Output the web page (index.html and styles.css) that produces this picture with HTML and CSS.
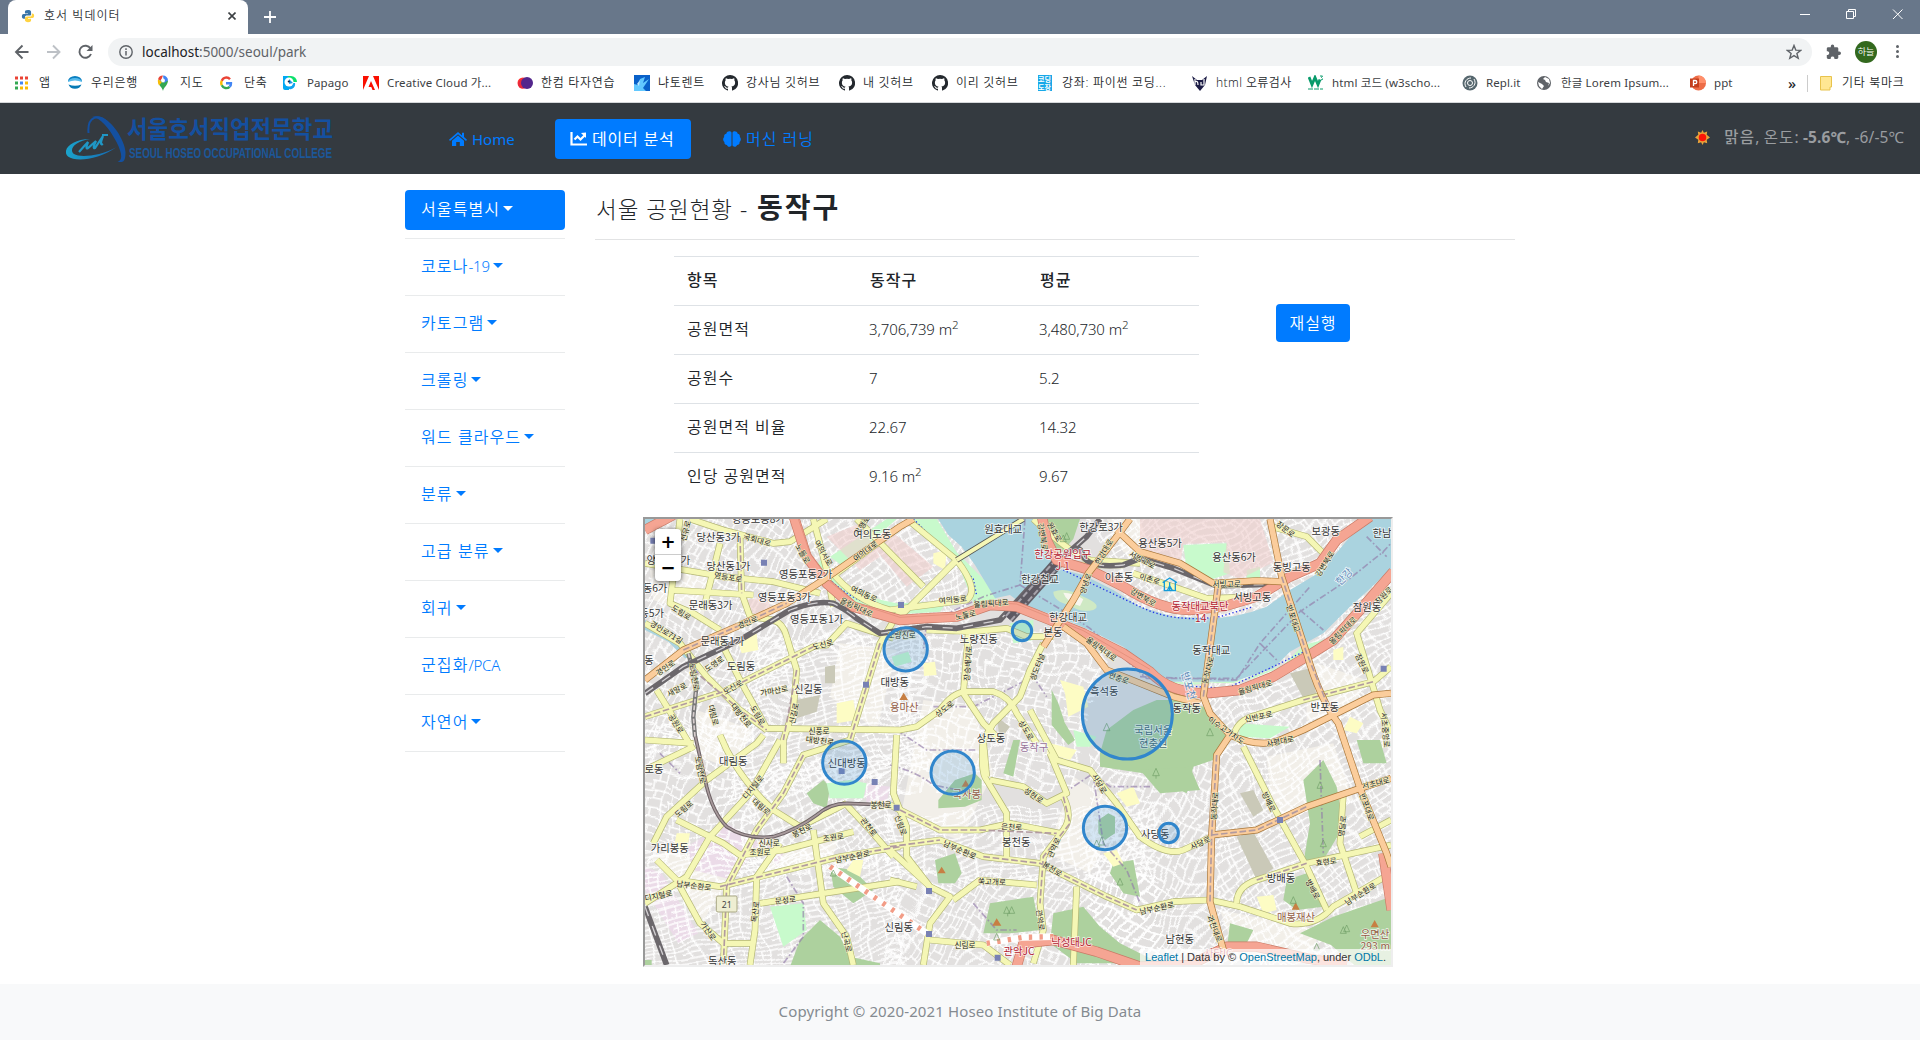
FILE: index.html
```html
<!DOCTYPE html>
<html lang="ko">
<head>
<meta charset="utf-8">
<title>호서 빅데이터</title>
<link rel="stylesheet" href="styles.css">
</head>
<body>
<svg width="0" height="0" class="sprite">
  <symbol id="github" viewBox="0 0 16 16"><path fill="#24292e" d="M8 0a8 8 0 0 0-2.500 15.600c.4.1.5-.2.5-.4v-1.500c-2.200.5-2.700-1-2.700-1-.4-.9-.9-1.200-.9-1.200-.7-.5.1-.5.1-.5.800.1 1.200.8 1.200.8.7 1.300 1.900.9 2.300.7.1-.5.3-.9.5-1.100-1.800-.2-3.600-.9-3.600-4 0-.9.3-1.600.8-2.100-.1-.2-.4-1 .1-2.100 0 0 .7-.2 2.200.8a7.500 7.500 0 0 1 4 0c1.500-1 2.200-.8 2.200-.8.4 1.100.2 1.900.1 2.100.5.6.8 1.300.8 2.100 0 3.100-1.900 3.700-3.700 3.900.3.300.6.800.6 1.500v2.400c0 .2.1.5.600.4A8 8 0 0 0 8 0z"/></symbol>
</svg>

<header class="tabs">
  <div class="tab">
    <svg class="fav" viewBox="0 0 16 16"><path fill="#3974a8" d="M8 1c-3 0-3.500 1-3.500 2.500V5H8v.7H3C1.500 5.700 1 7 1 8.500S1.800 11 3 11h1.500V9.500C4.500 8 5.500 7.500 7 7.500h3c1 0 1.500-.6 1.500-1.500V3.500C11.500 1.500 10 1 8 1z"/><path fill="#ffd342" d="M8 15c3 0 3.500-1 3.500-2.500V11H8v-.7h5c1.500 0 2-1.300 2-2.800S14.200 5 13 5h-.7v1.800c0 1.200-1 1.900-2.200 1.900H7c-1.500 0-2.500.8-2.500 2v2C4.500 14.500 6 15 8 15z"/></svg>
    <span class="tabtitle">호서 빅데이터</span>
    <svg class="x" viewBox="0 0 8 8"><path d="M.5.5l7 7m0-7l-7 7" stroke="#3c4043" stroke-width="1.600"/></svg>
  </div>
  <svg class="plus" viewBox="0 0 12 12"><path d="M6 0v12M0 6h12" stroke="#fff" stroke-width="1.800"/></svg>
  <svg class="winbtns" viewBox="0 0 104 12"><g fill="none" stroke="#fff"><path d="M0 6.500h10M46.500 3.500h7v7h-7zM48.500 3v-1.500h7v7h-2M93 1.500l9.500 9.500m0-9.500L93 11"/></g></svg>
</header>

<div class="toolbar">
  <svg class="navico" viewBox="0 0 80 18"><g fill="none" stroke="#5f6368" stroke-width="1.900"><path d="M14.500 9H2M8.500 2.500L2 9l6.500 6.500"/><path stroke="#bdc1c6" d="M33 9h12.500M39 2.500L45.500 9 39 15.500"/><path d="M76.500 5.500A6 6 0 1 0 77 11"/></g><path fill="#5f6368" d="M78.500 2v6h-6z"/></svg>
  <div class="url">
    <svg class="info" viewBox="0 0 14 14"><circle cx="7" cy="7" r="6.200" fill="none" stroke="#5f6368" stroke-width="1.400"/><path d="M7 6v4.500M7 3.300v1.600" stroke="#5f6368" stroke-width="1.500"/></svg>
    <span><b>localhost</b>:5000/seoul/park</span>
    <svg class="star" viewBox="0 0 16 16"><path d="M8 1.500l1.800 4.600 4.900.3-3.800 3.100 1.300 4.800L8 11.600l-4.200 2.700 1.300-4.800L1.300 6.400l4.900-.3z" fill="none" stroke="#5f6368" stroke-width="1.400"/></svg>
  </div>
  <svg class="puzzle" viewBox="0 0 16 16"><path fill="#5f6368" d="M13.300 7.500h-1V4.700c0-.8-.6-1.400-1.400-1.400H8.200v-1a1.700 1.700 0 0 0-3.400 0v1H2.100C1.400 3.300.8 3.900.8 4.700v2.500h1a1.900 1.900 0 0 1 0 3.700h-1v2.600c0 .8.600 1.400 1.300 1.400h2.600v-1a1.900 1.900 0 0 1 3.700 0v1h2.500c.800 0 1.400-.6 1.400-1.400v-2.600h1a1.700 1.700 0 0 0 0-3.400z"/></svg>
  <span class="avatar">하늘</span>
  <span class="dots"><i></i><i></i><i></i></span>
</div>

<nav class="bookmarks">
  <a><svg viewBox="0 0 16 16"><path stroke="#ea4335" stroke-width="3" d="M0 3h3m2 0h3m2 0h3"/><path stroke="#34a853" stroke-width="3" d="M0 8h3M0 13h3"/><path stroke="#4285f4" stroke-width="3" d="M5 8h3"/><path stroke="#fbbc04" stroke-width="3" d="M10 8h3M5 13h3m2 0h3"/></svg><span>앱</span></a>
  <a><svg viewBox="0 0 16 16"><path fill="#0a7fc0" d="M1 6.500a7 5.500 0 0 1 14 0Q8 1.500 1 6.500z"/><path fill="#57bbec" d="M1 7a7 4 0 0 1 14 0Q8 4 1 7z"/><path fill="#067ab5" d="M1.500 9.500Q8 12 14.500 9.500a6.800 6 0 0 1-13 0z"/></svg><span>우리은행</span></a>
  <a><svg viewBox="0 0 16 16"><path fill="#34a853" d="M7 16C6.500 12.500 2 10 2 5.500h10C12 10 7.500 12.500 7 16z"/><path fill="#4285f4" d="M7 .5a5 5 0 0 1 5 5L8 8z"/><path fill="#ea4335" d="M2 4.500a5 5 0 0 1 5-4l-2 5z"/><path fill="#fbbc04" d="M2 4.500L6 7l-3 3.500C2 8 1.500 6 2 4.500z"/><circle cx="7" cy="5.500" r="1.900" fill="#fff"/></svg><span>지도</span></a>
  <a><svg viewBox="0 0 16 16" fill="none" stroke-width="2.400"><path stroke="#ea4335" d="M10 4.300A4.800 4.800 0 0 0 1.800 5.800"/><path stroke="#fbbc04" d="M1.800 5.800a5 5 0 0 0 0 4.500"/><path stroke="#34a853" d="M1.800 10.300a4.900 4.900 0 0 0 7.800 1.500"/><path stroke="#4285f4" d="M9.600 11.800c1.100-1.200 1.500-2.300 1.400-3.500H6"/></svg><span>단축</span></a>
  <a><svg viewBox="0 0 16 16"><path fill="#00a8f3" d="M0 1h6v14H2a2 2 0 0 1-2-2z"/><path fill="#0be06b" d="M5 1h3a6 6 0 0 1 6 6H7z"/><path fill="#10a4f0" d="M6 8h6a5 5 0 0 1-6 6z"/><circle cx="6" cy="7" r="4.500" fill="#fff"/><path fill="#1798e5" d="M6 4l4 4-4 1z"/><circle cx="5.800" cy="6.500" r="1.100" fill="#124"/></svg><span class="latin">Papago</span></a>
  <a><svg viewBox="0 0 16 16" fill="#fa0f00"><path d="M0 1h6L0 15zM16 1h-6l6 14zM8 6l4 9H9.500L8.300 12H5.500z"/></svg><span class="mix">Creative Cloud 가...</span></a>
  <a><svg viewBox="0 0 16 16"><circle cx="6" cy="8" r="5.500" fill="#f33"/><circle cx="5.500" cy="9" r="4.500" fill="#e8283c"/><circle cx="10" cy="8" r="6" fill="#53268c"/></svg><span>한컴 타자연습</span></a>
  <a><svg viewBox="0 0 16 16"><path fill="#0961c9" d="M0 0h16v16H0z"/><path fill="#62c8ff" d="M0 16V9l4 1 2-6 5-2-2 6 6-4-4 6-2 3 3 3z"/><path fill="#bfeaff" d="M3 9l3-4-1 6z"/></svg><span>냐토렌트</span></a>
  <a><svg><use href="#github"/></svg><span>강사님 깃허브</span></a>
  <a><svg><use href="#github"/></svg><span>내 깃허브</span></a>
  <a><svg><use href="#github"/></svg><span>이리 깃허브</span></a>
  <a><svg viewBox="0 0 16 16" class="coding"><path fill="#18a8e8" d="M0 0h14v16H0z"/><text x="0" y="7">코딩</text><text x="0" y="15">도장</text></svg><span>강좌: 파이썬 코딩...</span></a>
  <a><svg viewBox="0 0 16 16"><path fill="#1c1c45" d="M0 1l5 4h5l5-4-2 9-5 6-5-6z"/><path fill="none" stroke="#fff" stroke-width="1.200" d="M3 4v6m0-3q3-2 3 3m3-3v3h3V4"/></svg><span class="tight">html 오류검사</span></a>
  <a><svg viewBox="0 0 16 16"><path fill="none" stroke="#089b6b" stroke-width="2.800" d="M1 2l3 7.500 3-7 3 7 2-5"/><path fill="none" stroke="#089b6b" d="M12 1h2.500l-1 1.500L15 4l-2 1M0 14h15" stroke-dasharray="5 1"/></svg><span class="mix">html 코드 (w3scho...</span></a>
  <a><svg viewBox="0 0 16 16"><circle cx="8" cy="8" r="7.500" fill="#56676e"/><g fill="none" stroke="#fff"><circle cx="8" cy="8" r="2.500"/><path d="M4 12C1 7 5 3 9 3m3 1c3 5-1 9-5 9"/></g></svg><span class="latin">Repl.it</span></a>
  <a><svg viewBox="0 0 16 16"><circle cx="7" cy="8" r="7" fill="#5f6368"/><path fill="#fff" d="M8 2L6 4l2 1 1 2 3 1-1 3 2-3-1-4zM1 7l4 2 2 2-2 3-3-3z"/></svg><span class="mix">한글 Lorem Ipsum...</span></a>
  <a><svg viewBox="0 0 16 16"><circle cx="8.500" cy="8" r="7.500" fill="#ed6c47"/><path fill="#ff8f6b" d="M8.500.5a7.500 7.500 0 0 1 7.500 7.500H8.500z"/><path fill="#c43e1c" d="M0 3.500h9v9H0z"/><path fill="none" stroke="#fff" stroke-width="1.300" d="M3.500 11V5.500h1.700a1.500 1.500 0 0 1 0 3.200H3.500"/></svg><span class="latin">ppt</span></a>
  <b class="more">»</b>
  <a class="other"><svg viewBox="0 0 16 16"><path fill="#ffe793" stroke="#e8c34c" d="M1.500 1.500h11V12h-1.500v3H1.500z"/></svg><span>기타 북마크</span></a>
</nav>

<div class="navbar">
  <svg class="logo" viewBox="0 0 270 50">
    <defs><linearGradient id="lg"><stop offset="0" stop-color="#1ba4cc"/><stop offset="1" stop-color="#1566b0"/></linearGradient></defs>
    <path fill="none" stroke="#1450a0" stroke-width="2" d="M22.500 19C21 2 33-1 42 9"/>
    <path fill="#1450a0" d="M26 3c16-6 34 24 33.500 36 0 6-1.500 9-4 9h-4c6-2 4-10-1-20C43 14 35 4 26 3z"/>
    <path fill="url(#lg)" d="M24 25C6 25-5 36 2 42.500c8 6 31 3 48-9C34 42 14 44 8 40 2 35 10 27 24 25z"/>
    <path fill="none" stroke="#1f97c6" stroke-width="2.200" d="M13 38q7-8 9-10-3 8 0 6l8-7q-4 8-1 7l8-12q-4 10 0 8M36 21h6"/>
    <text class="logo-ko" x="61" y="24" textLength="206" lengthAdjust="spacingAndGlyphs">서울호서직업전문학교</text>
    <text class="logo-en" x="63" y="44" textLength="203" lengthAdjust="spacingAndGlyphs">SEOUL HOSEO OCCUPATIONAL COLLEGE</text>
  </svg>
  <div class="menu">
    <a class="home"><svg viewBox="0 0 18 16"><path fill="#007bff" d="M9 1L0 8.700l1 1.200L9 3.200l8 6.700 1-1.200-3-2.600V1.800h-2v2.600zM9 4.600L3 9.700V15h4.200v-4h3.600v4H15V9.700z"/></svg><span>Home</span></a>
    <a class="current"><svg viewBox="0 0 18 16"><path fill="none" stroke="#fff" stroke-width="2.200" d="M1.500 1v12.500H17M4.500 8.500l3-3 3 3L15 4"/><path fill="#fff" d="M16 1.500V7l-5-5z"/></svg><span>데이터 분석</span></a>
    <a class="ml"><svg viewBox="0 0 18 16"><path fill="#007bff" d="M8.500 1.500v13c-1.500 2-4 1.500-4.500-.5-2 0-3-1.500-2.500-3C-.3 9.800-.2 7 1.200 6 .8 4 1.800 3 3.300 2.700 4 0 7.500-.3 8.500 1.500zM9.500 1.500v13c1.500 2 4 1.500 4.500-.5 2 0 3-1.500 2.500-3 1.800-1.200 1.700-4 .3-5 .4-2-.6-3-2.100-3.300C14 0 10.500-.3 9.500 1.500z"/></svg><span>머신 러닝</span></a>
  </div>
  <div class="weather"><svg viewBox="0 0 16 16"><path fill="#e9a33a" d="M8 0l1.500 3 3.500-1.500-.5 3.500L16 8l-3.500 2.500.5 3.500-3.500-1L8 16l-1.500-3L3 14l.5-3.500L0 8l3.500-3L3 1.500 6.500 3z"/><circle cx="8" cy="8" r="4" fill="#fb1508"/></svg><span><em>맑음</em>, <u>온도</u>: <b>-5.6℃</b>, -6/-5℃</span></div>
</div>

<main>
  <aside>
    <div class="item"><a class="pill">서울특별시<i></i></a></div>
    <div class="item"><a>코로나<small>-19</small><i></i></a></div>
    <div class="item"><a>카토그램<i></i></a></div>
    <div class="item"><a>크롤링<i></i></a></div>
    <div class="item"><a>워드 클라우드<i></i></a></div>
    <div class="item"><a>분류<i></i></a></div>
    <div class="item"><a>고급 분류<i></i></a></div>
    <div class="item"><a>회귀<i></i></a></div>
    <div class="item"><a>군집화<small>/PCA</small></a></div>
    <div class="item"><a>자연어<i></i></a></div>
  </aside>
  <section>
    <h3>서울 공원현황 - <strong>동작구</strong></h3>
    <div class="row">
      <table>
        <tr><th>항목</th><th>동작구</th><th>평균</th></tr>
        <tr><td>공원면적</td><td class="n">3,706,739 m<sup>2</sup></td><td class="n">3,480,730 m<sup>2</sup></td></tr>
        <tr><td>공원수</td><td class="n">7</td><td class="n">5.2</td></tr>
        <tr><td>공원면적 비율</td><td class="n">22.67</td><td class="n">14.32</td></tr>
        <tr><td>인당 공원면적</td><td class="n">9.16 m<sup>2</sup></td><td class="n">9.67</td></tr>
      </table>
      <button>재실행</button>
    </div>
    <div class="map">
      <svg class="tiles" viewBox="15 27 2238 1338" preserveAspectRatio="none">
        <defs>
          <pattern id="s1" width="66" height="54" patternUnits="userSpaceOnUse" patternTransform="rotate(12)"><path class="st" d="M0 4h66M0 29h44M18 4v25M44 0v54M44 42h22M6 29v25"/></pattern>
          <pattern id="s2" width="60" height="44" patternUnits="userSpaceOnUse" patternTransform="rotate(-32)"><path class="st" d="M0 4h60M0 24h60M20 4v20M48 0v44M34 24v20"/></pattern>
          <pattern id="s3" width="72" height="48" patternUnits="userSpaceOnUse" patternTransform="rotate(-12)"><path class="st" d="M0 3h72M0 18h72M0 34h50M50 0v48M20 18v30"/></pattern>
          <pattern id="s4" width="58" height="64" patternUnits="userSpaceOnUse" patternTransform="rotate(28)"><path class="st" d="M0 4h58M12 4v60M32 4v34M46 0v64M12 38h34M0 54h12"/></pattern>
          <filter id="wob" x="0" y="0" width="1" height="1"><feTurbulence type="fractalNoise" baseFrequency=".006" numOctaves="2" seed="4"/><feDisplacementMap in="SourceGraphic" scale="90" xChannelSelector="R" yChannelSelector="G"/></filter>
          <g id="yel">
            <path d="M120 27L90 280 160 310 240 360M150 27L250 60 400 100 450 95 560 27M15 160L250 200 400 215 540 250M90 240l250 15M240 100L190 300"/>
            <path d="M300 80L305 250 330 320 400 330Q430 340 440 380L470 480 460 600 430 690 430 760"/>
            <path d="M15 620L250 545 380 480 520 410 560 405 620 340 760 385"/>
            <path d="M15 340L120 400 200 500 300 600 380 660M230 370L300 510 380 655 780 660 830 650 900 600Q940 545 980 545L1060 545Q1110 560 1130 610L1190 700"/>
            <path d="M780 300L720 400 670 560 630 690 490 735 430 850 350 960 260 1130 250 1365M520 27L560 180 580 290"/>
            <path d="M860 360L1000 365 1100 355 1160 380 1240 380M985 370L970 550 1030 640 1080 690M1210 400L1170 480 1140 560 1060 640 1030 690 1040 800"/>
            <path d="M800 27L950 150 780 320M950 150Q1020 240 980 270L750 300Q640 270 570 180M590 190L780 50M650 27L850 230"/>
            <path d="M1180 27Q1290 130 1350 150L1500 160M1300 165L1450 165M1480 190L1600 230 1700 265 1800 262M1895 50L2000 80 2050 130M1950 190L2040 160"/>
            <path d="M1780 680Q1790 630 1850 615L1990 570 2200 515 2253 470M2253 250L2150 370 2190 500 2220 600 2253 670"/>
            <path d="M420 690L330 850 210 980 140 1100 15 1180M50 1050L110 1110 240 1130 400 1090 600 1040 780 1010M120 1130L180 1240 250 1300 340 1300"/>
            <path d="M750 885L780 900 900 960 1020 960 1110 940 1260 970M750 1010L900 990 1030 1040 1200 1060 1280 1100 1400 1160 1490 1200 1600 1175 1710 1170 1800 1190 1950 1240Q2030 1250 2080 1190L2253 1090"/>
            <path d="M770 675L760 850 800 950 800 1040 870 1130 930 1160 870 1240 850 1365M750 1020L870 1130M750 1110l80 20M1810 710L1900 890 2000 1070 2060 1200"/>
            <path d="M1790 1180Q1790 1130 1850 1110L2000 1060 2253 1005M2110 850L2100 1000 2150 1150M2160 980L2253 930"/>
            <path d="M1170 600L1250 750 1350 780 1430 880 1500 980Q1580 1040 1630 1020L1715 980M1030 680Q1020 790 1040 810L1100 910 1100 1050"/>
            <path d="M1050 810L1150 830 1220 880 1280 850 1230 730M1270 860Q1300 920 1270 960L1210 1040 1200 1180 1210 1260 1180 1360M620 885L690 960 760 1040"/>
            <path d="M520 960L550 1180 620 1280 640 1365M360 1180L550 1150 780 1115M420 1000L350 1100 345 1260 330 1365M240 675Q290 800 400 900L480 950 620 880"/>
            <path d="M40 1000L80 920 200 810 350 700 370 675M110 930L250 1000 300 1035 430 1020 640 965M940 1170L1020 1110 1190 1125M870 1290L1030 1305 1110 1365M1310 1130L1300 1365M15 690L160 700M50 540L160 720M15 780L160 710"/>
          </g>
          <g id="org">
            <path d="M15 510L130 420 290 350 440 280 550 210 780 50 820 27"/>
            <path d="M1470 27L1430 80 1345 190 1300 270 1210 410M1430 60L1500 125 1620 160 1720 220 1850 212 1925 215M1890 27L1925 200 2000 430Q2040 570 2095 640L2160 835 2240 1030 2253 1070"/>
            <path d="M1735 225L1690 560 1710 610 1770 675 1730 735 1715 975 1710 1175 1750 1320M1770 675Q1860 715 1920 690L1990 660 2110 600 2200 555 2253 550M1715 975L1850 960 2000 890 2160 835 2253 805M1270 350L1340 400 1400 480 1500 520 1600 560 1680 580"/>
          </g>
          <g id="red">
            <path d="M460 15L500 140 560 220 640 290 780 330 850 325 950 320 1050 285 1130 290 1230 330 1330 370 1450 430 1530 485Q1590 550 1700 550L1800 540 1900 500 2000 440 2080 390 2160 300 2260 185"/>
            <path d="M1205 15L1220 90 1250 150 1350 180 1450 230Q1560 300 1650 300L1750 290 1850 260 1950 200 2040 160 2090 90 2190 20"/>
            <path d="M1130 1370L1150 1300 1240 1290 1370 1325 1500 1370 1650 1365 1760 1310 1850 1310 2000 1345 2120 1365M2230 1030L2255 1200M15 60L100 15"/>
          </g>
          <path id="rail" d="M15 550L130 470 300 390 450 300Q530 270 580 280 620 300 650 325L720 370 860 350 950 355 1080 330 1180 220 1260 150 1340 80 1380 27M15 1190L80 1365M1270 140Q1320 90 1330 140 1350 175 1450 165L1500 145 1600 175 1730 228 1920 222"/>
          <path id="line2" d="M165 675L200 830Q220 910 260 950 320 990 400 980 470 960 530 915 570 880 620 880L750 885"/>
        </defs>
        <path fill="#e2e0df" d="M0 0h2300v1400H0z"/>
        <g fill="#f2efe9"><path d="M30 180l180 20-20 120-150-50zM600 400l170 20-60 240-140-100zM850 570l150 20 60 200-100 200-180-60zM1300 800l150 90-100 200-130-60zM1880 740l200-40 60 170-240 60zM1400 27h100l40 120-90-20zM30 1040l200-60 60 100-100 150zM1740 1200l300 60-30 90-220-10zM2000 450l180 60-50 100-130 20zM170 600l170 60-60 120-150-60zM400 1010l200-30-30 80-200 40z"/></g>
        <g fill="#ebdbe8"><path d="M15 1070l50 20 110 180-60 30-100-160zM140 1010l120-70 100 60-80 110-120-30zM380 1000l60 10-30 60zM670 820l80 10-10 50-60 0z"/></g>
        <g filter="url(#wob)">
          <path fill="url(#s4)" d="M-50-50h550v500l-300 300h-250z"/><path fill="url(#s2)" d="M500-50h500v380l-500 100z"/><path fill="url(#s3)" d="M350 380l500-20v430l-600 100z"/><path fill="url(#s1)" d="M800 360h600l-100 480h-550z"/><path fill="url(#s1)" d="M-50 650l400-50v450H-50z"/><path fill="url(#s2)" d="M350 780l420-60v340l-500 80z"/><path fill="url(#s3)" d="M-50 1030h850v400H-50z"/><path fill="url(#s3)" d="M750 900h800v200H750z"/><path fill="url(#s4)" d="M750 1080h800v350H750z"/><path fill="url(#s4)" d="M1350 700h380v700h-380z"/><path fill="url(#s2)" d="M1720 560h620v870h-620z"/><path fill="url(#s2)" d="M1300-50h1040v620h-740z"/>
        </g>
        <g class="wood">
          <path d="M1180 27h140l-20 60-60 70-40-60zM1380 730L1400 660 1480 600 1550 570 1620 570 1690 590 1760 670 1720 750 1660 770 1640 850 1560 810 1510 790 1380 770zM1235 540l20 40 20 60 30 50-20 15-50-60z"/>
          <path d="M500 850l50-40 20 20-10 65-40-15zM895 870l50-60 60-20 20 20 0 60-50 20-80 5zM1120 690h20l-20 110-30-10zM570 1070l70 10 60 60-60 40-60-50zM480 1290l60-60 60 50 30 60 90 20v10H450zM15 1350h20v15H15z"/>
          <path d="M885 1050l60-20 20 60-20 30-50 0zM1050 1180l130-20 20 100-90 10-80 0zM1240 1210l90-20 50 60 60 50 120 60h-250l-80-60zM1375 930l30-20 20 10 0 50-30 20-20-20zM1420 1060l60-10 20 110-50-10-40-60zM1990 810l60-60 40 80 20 120-60 100-60 10 20-120zM1940 1110l60-20 50 100-80 10-40-30zM1980 1270l100-50 173-60v205h-110l-70-60zM2150 690l70 0 20 70-70 0zM1770 1240l70 20-30 60h-50zM1500 780l150-10 30 70-120 10z"/>
        </g>
        <g fill="#c8facc"><path d="M820 27h70l60 100 80 80 40 60-70 10-40-100-120-120zM570 140L740 27h30L610 170zM540 150q60 100 230 130l150-5-20 30-160 10q-150-30-220-130zM1630 105l130-5 10 90-60 20-70-30zM1500 290q100 50 200 40l150-20-60 25-170 15-120-30zM1580 515l200 5 150-55 60-60 80-20 80-100-30 80-110 70-170 70-190 20zM560 820l70-10 50 10-10 45-100 0zM390 1190l100-10 10 80-70 50zM1300 660l70 20-20 30-40 0zM1820 180l40-10v50l-40 10zM755 440l50-15 10 30-50 15zM1110 340l70-10v60l-60 10zM1790 640l160 10-60 35-90-5z"/></g>
        <g fill="#fdfcc4"><path d="M290 380l60-10 5 50-50 10zM590 580l50-10 10 60-60 10zM850 460l35-5 5 40-38 3zM1260 510l70 20 15 60-60 30-10-70zM1430 850l50-20 20 50-40 10zM1850 1160l50-5 10 45-40 10zM1390 1030l40-10 20 40-30 10zM110 970l40 0-10 50-40 0zM1230 700l80 20-20 30-70-20zM640 1050l30 0-10 50-40-20zM2130 620l40 20-20 30-40-10zM2080 420l30-10 0 40-30 0zM880 130l40-10-5 60-35-20z"/></g>
        <g fill="#cac9b8"><path d="M1790 980l50-15 60 110-50 35zM1800 850l40-10 30 60-30 20zM555 470l30-5 0 55-30 0zM1950 490l60-15 20 80-40 10zM470 570l70-15-10 50-60 20zM1070 620l40 30-30 40z"/></g>
        <g fill="#f0cfcd" opacity=".6"><path d="M1500 27h360l40 130-100 50-50-20 10-90-130 5-10 70-120-30zM750 60l130 110-80 60-100-120zM560 80l100-40 60 100-60 40zM320 270l60-10 20 50-70 10z"/></g>
        <path fill="#aad3df" d="M890 20L925 75 965 110 1005 165 1065 265 1110 255 1150 285 1250 318 1330 352 1450 410 1530 475 1590 515 1780 515 1900 475 1950 425 2050 370 2130 290 2180 245 2260 170V20h-55L2130 80 2080 140 2050 180 1950 240 1880 290Q1790 325 1700 325L1600 320 1500 290 1420 240 1330 195 1250 175 1210 110 1190 20zM15 27h60l-60 30zM15 330l90 50 50 60-20 5-50-50-70-35z"/>
        <path fill="#cfe9c4" d="M1240 245q40-15 90 15 60 25 30 40-40 10-70-15-50-10-50-40z"/><path fill="#f7f6ef" d="M1270 248q30 0 60 20l-10 20q-40-10-50-40z"/>
        <g class="bound"><path d="M1155 27L1140 225 1030 260 860 340 850 420M1140 225l150 90 60 40 170 150 270 0 190-200 150-100 100-80 90-100M1500 500l290 10 70-110 150-170M1860 400l50 50M1980 300l70 60M2180 80l60 60M750 765q80 20 130 60l150 30M880 590l120 0 180-90 40 60M770 660l90 60 150 0M1270 850l90-60 50 40 120 0M60 730l60 60M1360 800l30 200 70 80 40 100M2040 750l10 280M440 1100l50 80 0 100-60 80M1000 1180l70 80 60 0"/></g>
        <g fill="none" stroke="#2432e8" stroke-width="4" stroke-dasharray="4 7"><path d="M820 27l80 80 100 100 10 50M950 150L1120 50M1270 180l230 110q100 50 240 30l100-30M1580 525l180 10 150-70 60-30 120-50 70-100 90-80M15 345l100 45 60 100M560 200q90 90 210 100"/></g>
        <use href="#yel" class="cas" stroke="#b3b675" stroke-width="20"/><use href="#yel" class="cas" stroke="#f5f7b5" stroke-width="16"/>
        <g class="centre"><path d="M490 735L430 850 350 960 260 1130 250 1365M240 1130L400 1090 600 1040 780 1010M15 620L250 545 380 480 520 410M720 400L670 560 630 690M300 80L305 250M470 480L430 690M1030 1040L1200 1060 1400 1160 1490 1200M1270 860L1290 940 1210 1040 1200 1180M780 900L900 960 1020 960 1250 970M160 480L300 600 380 660M1850 1110L2000 1060M1990 570L2200 515M750 1010L900 990"/></g>
        <use href="#line2" class="cas" stroke="#6d6265" stroke-width="11"/><use href="#line2" class="cas" stroke="#a89a9c" stroke-width="5"/>
        <path fill="none" stroke="#777" stroke-width="13" d="M145 430L170 520 160 620 165 680"/><path fill="none" stroke="#d9cfcf" stroke-width="5" stroke-dasharray="14 6" d="M145 430L170 520 160 620 165 680"/>
        <use href="#rail" class="cas" stroke="#6b676b" stroke-width="17"/><use href="#rail" class="cas" stroke="#d3d0d3" stroke-width="4" stroke-dasharray="30 32"/>
        <path class="cas" stroke="#625e66" stroke-width="36" d="M1105 325L1260 150"/><path class="cas" stroke="#a8a4ac" stroke-width="26" stroke-dasharray="18 8" d="M1105 325L1260 150"/><path class="cas" stroke="#5d5962" stroke-width="14" d="M1105 325L1260 150"/>
        <path class="cas" stroke="#555" stroke-width="17" d="M950 150L1150 27"/><path class="cas" stroke="#f5f7b5" stroke-width="12" d="M950 150L1150 27"/>
        <use href="#red" class="cas" stroke="#c97a66" stroke-width="31"/><use href="#red" class="cas" stroke="#f5a593" stroke-width="27"/>
        <path class="cas" stroke="#dd8974" stroke-width="2" d="M475 27L510 130 570 215 650 280 780 322 950 312 1050 278 1130 282 1330 362 1530 478"/>
        <use href="#org" class="cas" stroke="#a9773a" stroke-width="21"/><use href="#org" class="cas" stroke="#fbcd9c" stroke-width="17"/>
        <g class="centre"><path d="M1690 560L1735 225M1925 200L2000 430 2065 590M1730 735L1715 975 1710 1175M1715 975L1850 960 2000 890M130 420L290 350 440 280"/></g>
        <g fill="none" stroke="#fff" stroke-width="20"><path d="M570 1070L780 1215 860 1270M1040 1300L1150 1282 1240 1280"/></g><g fill="none" stroke="#f29c86" stroke-width="16" stroke-dasharray="10 22"><path d="M570 1070L780 1215 860 1270M1040 1300L1150 1282 1240 1280"/></g>

        <g class="station"><path d="M363 149h18v18h-18zM669 515h18v18h-18zM774 276h18v18h-18zM596 774h18v18h-18zM695 807h18v18h-18zM761 884h18v18h-18zM858 1134h18v18h-18zM858 1263h18v18h-18zM1064 1334h18v18h-18zM1911 921h18v18h-18zM2222 467h18v18h-18zM31 83h18v18h-18z"/></g>
        <path fill="#c77f43" d="M791 548l13 22h-26zM977 810l12 20h-24zM905 1070l12 20h-24zM1070 1225l14 22h-27zM1967 1177l12 22h-24zM2204 1230l12 22h-24z"/>
        <g fill="none" stroke="#6f9f67" stroke-width="2"><path d="M1548 775l-10 22h20zM1548 797v9M1370 990l-9 20h18zM1385 980l-9 25h18zM1370 1010v9M1100 1190l-9 20h18zM1115 1190l-9 20h18zM1103 1210v9M2040 815l-9 20h18zM2050 990l-9 20h18zM1960 1160l-9 20h18zM2110 1250l-9 20h18zM2120 1245l-9 20h18zM2030 1300l-9 20h18zM1440 1105l-9 20h18zM1710 655l-10 22h20zM1400 640l-10 22h20zM1070 1270l-9 20h18zM580 1080l-9 18h18zM1270 75l-9 20h18zM1280 68l-9 20h18z"/></g>
        <path fill="none" stroke="#159bd8" stroke-width="4" d="M1568 218l21-14 22 14M1573 215v27h33v-27M1589 217v24M1582 242l7-15 8 15"/>
        <g><rect x="229" y="1158" width="62" height="48" rx="5" fill="#eeeed2" stroke="#aaa985" stroke-width="3"/><text x="260" y="1193" class="shield">21</text></g>

        <g class="rd">
          <text transform="translate(352 88)rotate(16)">국회대로</text><text transform="translate(490 130)rotate(60)">노들로</text><text transform="translate(552 128)rotate(60)">여의서로</text><text transform="translate(675 122)rotate(-36)">여의대로</text><text transform="translate(665 45)rotate(-55)">은행로</text><text transform="translate(265 200)rotate(10)">영등포로</text><text transform="translate(673 250)rotate(25)">여의동로</text><text transform="translate(650 290)rotate(25)">올림픽대로</text><text transform="translate(125 306)rotate(32)">도림로</text><text transform="translate(322 335)rotate(-22)">경인로</text><text transform="translate(80 365)rotate(32)">경인로71길</text><text transform="translate(75 472)rotate(-35)">경인로</text><text transform="translate(222 460)rotate(-35)">도영로</text><text transform="translate(548 402)rotate(-15)">도신로</text><text transform="translate(110 537)rotate(-28)">새말로</text><text transform="translate(278 530)rotate(-30)">도신로</text><text transform="translate(402 540)rotate(-10)">가마산로</text><text transform="translate(165 500)rotate(80)">도림천로</text><text transform="translate(222 615)rotate(75)">대림로</text><text transform="translate(305 615)rotate(52)">대방천로</text><text transform="translate(355 615)rotate(60)">도림로</text><text transform="translate(460 610)rotate(-78)">신길로</text><text transform="translate(110 640)rotate(58)">공원로</text><text x="537" y="660">신풍로</text><text transform="translate(540 690)rotate(6)">대방천로</text><text transform="translate(135 62)rotate(-75)">선유로</text>
          <text transform="translate(938 267)rotate(-5)">여의동로</text><text transform="translate(1053 278)rotate(-4)">올림픽대로</text><text transform="translate(976 313)rotate(-14)">노들로</text><text transform="translate(1210 80)rotate(80)">강변북로</text><text transform="translate(1245 65)rotate(60)">원효로</text><text transform="translate(1390 125)rotate(-60)">한강대로</text><text transform="translate(1335 220)rotate(-72)">양녕로</text><text transform="translate(1508 148)rotate(28)">서빙고로</text><text transform="translate(1510 260)rotate(30)">강변북로</text><text transform="translate(1385 415)rotate(36)">올림픽대로</text><text transform="translate(785 372)">노량진로</text><text transform="translate(982 460)rotate(-86)">장승배기로</text><text transform="translate(1190 470)rotate(-68)">상도터널</text><text transform="translate(912 595)rotate(-38)">상도로</text><text transform="translate(1160 660)rotate(60)">상도로</text><text transform="translate(1437 502)rotate(20)">현충로</text>
          <text transform="translate(1530 205)rotate(18)">이촌로</text><text x="1760" y="220">서빙고로</text><text transform="translate(1938 56)rotate(38)">장문로</text><text transform="translate(2053 160)rotate(-58)">강변북로</text><text transform="translate(1962 325)rotate(72)">반포대교</text><text transform="translate(2107 360)rotate(-45)">올림픽대로</text><text transform="translate(1845 530)rotate(-16)">올림픽대로</text><text transform="translate(1702 480)rotate(-76)">동작대로</text><text transform="translate(2168 460)rotate(65)">잠원로</text><text transform="translate(2230 255)rotate(-45)">잠원로</text><text transform="translate(1855 618)rotate(-12)">신반포로</text><text transform="translate(1760 660)rotate(35)">이수고가차도</text><text transform="translate(1920 692)rotate(-12)">사평대로</text><text transform="translate(2238 660)rotate(85)">서초중앙로</text>
          <text transform="translate(183 780)rotate(78)">도림천로</text><text transform="translate(130 895)rotate(-40)">도림로</text><text transform="translate(338 830)rotate(-50)">디지털로</text><text transform="translate(365 888)rotate(40)">대림로</text><text transform="translate(485 960)rotate(-28)">봉천로</text><text x="723" y="884">봉천로</text><text x="388" y="997">신사로</text><text x="360" y="1024">조원로</text><text transform="translate(580 980)rotate(-8)">조원로</text><text transform="translate(688 950)rotate(52)">관천로</text><text transform="translate(637 1038)rotate(-12)">남부순환로</text><text transform="translate(162 1125)rotate(7)">남부순환로</text><text transform="translate(436 1168)rotate(-6)">문성로</text><text transform="translate(344 1205)rotate(-83)">독산로</text><text transform="translate(206 1262)rotate(55)">가산로</text><text transform="translate(622 1295)rotate(75)">난곡로</text><text transform="translate(55 1155)rotate(-12)">디지털로</text>
          <text transform="translate(784 945)rotate(70)">신림로</text><text transform="translate(1182 855)rotate(35)">성현로</text><text transform="translate(1115 949)rotate(3)">은천로</text><text transform="translate(960 1018)rotate(24)">남부순환로</text><text transform="translate(1240 1012)rotate(-65)">관악로</text><text transform="translate(1238 1075)rotate(32)">봉천로</text><text transform="translate(1056 1113)rotate(3)">쑥고개로</text><text transform="translate(1203 1230)rotate(82)">관악로</text><text x="975" y="1302">신림로</text><text transform="translate(1380 820)rotate(60)">사당로</text><text transform="translate(1680 997)rotate(-24)">사당로</text><text transform="translate(1722 888)rotate(-86)">동작대로</text><text transform="translate(1888 875)rotate(65)">방배로</text><text transform="translate(2020 1137)rotate(62)">방배로</text><text transform="translate(1550 1192)rotate(-12)">남부순환로</text><text transform="translate(2160 1150)rotate(-32)">남부순환로</text><text transform="translate(2058 1053)rotate(-7)">효령로</text><text transform="translate(2105 948)rotate(-82)">명달로</text><text transform="translate(2207 817)rotate(-14)">서초대로</text><text transform="translate(2182 890)rotate(70)">반포대로</text><text transform="translate(1726 1255)rotate(68)">과천대로</text>
        </g>
        <g class="pl">
          <text x="355" y="38">영등포동8가</text><text x="235" y="94">당산동3가</text><text x="265" y="180">당산동1가</text><text x="497" y="203">영등포동2가</text><text x="433" y="273">영등포동3가</text><text x="212" y="297">문래동3가</text><text x="530" y="339">영등포동1가</text><text x="247" y="404">문래동1가</text><text x="303" y="479">도림동</text><text x="505" y="548">신길동</text><text x="697" y="83">여의도동</text><text x="45" y="245">동6가</text><text x="35" y="320">동5가</text><text x="27" y="463">동</text><text x="85" y="161">양평동1가</text><text x="764" y="529">대방동</text><text x="1090" y="69">원효대교</text><text x="1383" y="63">한강로3가</text><text x="1200" y="219">한강철교</text><text x="1284" y="332">한강대교</text><text x="1437" y="212">이촌동</text><text x="1016" y="400">노량진동</text><text x="1239" y="377">본동</text><text x="1393" y="554">흑석동</text><text x="1053" y="695">상도동</text><text x="1560" y="112">용산동5가</text><text x="1782" y="153">용산동6가</text><text x="1955" y="182">동빙고동</text><text x="2057" y="75">보광동</text><text x="2240" y="82">한남동</text><text x="1837" y="273">서빙고동</text><text x="2181" y="304">잠원동</text><text x="1714" y="431">동작대교</text><text x="1640" y="607">동작동</text><text x="2054" y="602">반포동</text><text x="280" y="764">대림동</text><text x="620" y="770">신대방동</text><text x="28" y="790">구로동</text><text x="89" y="1026">가리봉동</text><text x="1129" y="1009">봉천동</text><text x="776" y="1264">신림동</text><text x="247" y="1366">독산동</text><text x="1546" y="985">사당동</text><text x="1923" y="1115">방배동</text><text x="1619" y="1298">남현동</text>
          <g fill="#935c46"><text x="793" y="604">용마산</text><text x="980" y="864">국사봉</text><text x="1968" y="1234">매봉재산</text><text x="2205" y="1285">우면산</text><text x="2206" y="1320">293 m</text></g>
          <g fill="#b22030"><text x="1268" y="144">한강공원입구</text><text x="1268" y="181">J 1</text><text x="1680" y="300">동작대교북단</text><text x="1682" y="335">14</text><text x="1137" y="1334">관악JC</text><text x="1295" y="1307">낙성대JC</text><text x="1735" y="1340">사당IC</text></g>
          <g fill="#98719a"><text x="1182" y="722">동작구</text></g><g fill="#5c88b8"><text transform="translate(2120 208)rotate(-45)">한강</text><text transform="translate(1635 530)rotate(75)">반포천</text></g>
          <g fill="#43686d"><text x="1540" y="671">국립서울</text><text x="1540" y="711">현충원</text></g>
        </g>
        <g class="marks"><circle cx="797" cy="418" r="65"/><circle cx="1146" cy="363" r="29"/><circle cx="1462" cy="612" r="135"/><circle cx="613" cy="758" r="65"/><circle cx="938" cy="788" r="65"/><circle cx="1395" cy="954" r="65"/><circle cx="1586" cy="969" r="29"/></g>
      </svg>
      <div class="zoom"><span>+</span><span>−</span></div>
      <div class="attr"><a>Leaflet</a> | Data by © <a>OpenStreetMap</a>, under <a>ODbL</a>.</div>
    </div>
  </section>
</main>
<footer>Copyright © 2020-2021 Hoseo Institute of Big Data</footer>
</body>
</html>
```
FILE: styles.css
```css
* { box-sizing: border-box; }
body { margin: 0; height: 1040px; display: flex; flex-direction: column; overflow: hidden; background: #fff; color: #212529; font: 350 16px/24px "Noto Sans", "Noto Sans CJK KR", sans-serif; }
svg { display: block; flex: none; }
.sprite { position: absolute; }
a { text-decoration: none; white-space: nowrap; }
.tabs { height: 34px; flex: none; background: #68778a; display: flex; padding-left: 8px; }
.tab { width: 240px; background: #fff; border-radius: 8px 8px 0 0; display: flex; align-items: center; padding: 0 12px 2px 13px; }
.fav { width: 14px; height: 14px; }
.tabtitle { margin-left: 9px; font-size: 12px; letter-spacing: 1.050px; color: #303438; flex: 1; }
.x { width: 8px; height: 8px; }
.plus { width: 12px; height: 12px; margin: 11px 0 0 16px; }
.winbtns { width: 104px; height: 12px; margin: 8px 16px 0 auto; }
.toolbar { height: 35px; flex: none; display: flex; align-items: center; }
.navico { width: 80px; height: 18px; margin-left: 14px; }
.url { margin-left: 14px; width: 1704px; height: 28px; border-radius: 14px; background: #f1f3f4; display: flex; align-items: center; padding: 0 10px 0 11px; font-size: 13.5px; font-weight: 400; color: #5f6368; }
.url b { font-weight: 400; color: #202124; }
.url span { margin-left: 9px; flex: 1; }
.info { width: 14px; height: 14px; }
.star { width: 16px; height: 16px; }
.puzzle { width: 16px; height: 16px; margin-left: 14px; }
.avatar { width: 22px; height: 22px; border-radius: 50%; background: #33691e; color: #fff; font-size: 9px; line-height: 21px; text-align: center; margin-left: 13px; white-space: nowrap; }
.dots { margin-left: 19px; display: grid; gap: 2px; }
.dots i { width: 3px; height: 3px; border-radius: 50%; background: #5f6368; }
.bookmarks { height: 34px; flex: none; border-bottom: 1px solid #d5d7da; padding: 0 0 5px 15px; display: grid; align-items: center; font-size: 12px; line-height: 18px; color: #25282b; grid-template-columns: 52px 89px 64px 63px 80px 154px 117px 88px 117px 93px 106px 154px 116px 154px 75px 153px 98px 19px 1fr; }
.bookmarks a { display: flex; align-items: center; gap: 8px; }
.bookmarks a svg { width: 16px; height: 16px; }
.bookmarks span { letter-spacing: .7px; }
.bookmarks .latin { font-size: 11.5px; letter-spacing: .1px; font-weight: 400; color: #3c4043; }
.bookmarks .mix { font-size: 11.5px; letter-spacing: .15px; font-weight: 400; color: #3c4043; }
.bookmarks .tight { letter-spacing: .4px; }
.coding text { font-size: 7px; font-weight: 700; fill: #fff; }
.more { font-size: 15px; line-height: 16px; font-weight: 500; }
.bookmarks .other { border-left: 1px solid #ccc; padding-left: 11px; gap: 7px; height: 17px; }
.navbar { height: 71px; flex: none; background: #343a40; display: flex; align-items: center; padding: 0 16px 0 66px; }
.logo { width: 270px; height: 50px; }
.logo-ko { font: 700 24px "Noto Sans CJK KR", sans-serif; fill: #1450a0; }
.logo-en { font: 700 15px "Liberation Sans", sans-serif; fill: #1c5799; }
.menu { display: flex; align-items: center; margin-left: 113px; color: #007bff; letter-spacing: 1px; }
.menu a { display: flex; align-items: center; gap: 5px; }
.menu svg { width: 18px; height: 16px; }
.home { width: 106px; letter-spacing: 0; font-size: 15px; font-weight: 400; }
.current { width: 136px; height: 40px; padding-left: 15px; border-radius: 4px; background: #007bff; color: #fff; font-weight: 400; }
.menu .current { gap: 4px; letter-spacing: .8px; }
.ml { margin-left: 32px; }
.weather { margin-left: auto; display: flex; align-items: center; gap: 14px; color: #9a9da0; font-size: 15.5px; letter-spacing: .1px; font-weight: 400; padding-bottom: 4px; }
.weather em { font-style: normal; font-weight: 500; letter-spacing: 1.200px; }
.weather u { text-decoration: none; letter-spacing: 1.200px; }
.weather svg { width: 15px; height: 15px; margin-top: 2px; }
main { flex: 1; display: flex; padding: 16px 405px 0; }
aside { width: 160px; }
.item { height: 57px; border-bottom: 1px solid #e9ebec; display: flex; align-items: center; }
.item:first-child { height: 49px; align-items: flex-start; }
.item a { color: #007bff; padding-left: 16px; letter-spacing: 1.100px; width: 160px; height: 40px; line-height: 39px; }
.item small { font-size: 15px; letter-spacing: -.2px; }
.item .pill { background: #007bff; color: #fff; border-radius: 4px; }
.item i { display: inline-block; border: 5px solid transparent; border-top-color: currentColor; border-bottom: 0; margin-left: 3px; vertical-align: 4px; }
section { width: 920px; margin-left: 30px; }
h3 { margin: 0; height: 50px; border-bottom: 1px solid #e2e3e4; font-weight: 300; font-size: 22.5px; line-height: 34px; letter-spacing: 1px; padding-left: 1px; }
h3 strong { font-size: 28px; letter-spacing: 2px; font-weight: 700; margin-left: 2px; }
.row { display: flex; align-items: flex-start; padding: 16px 0 0 79px; height: 277px; }
table { width: 525px; border-collapse: collapse; table-layout: fixed; }
td, th { height: 49px; padding: 0 0 2px 13px; text-align: left; border-top: 1px solid #dee2e6; letter-spacing: 1px; vertical-align: middle; }
th { font-weight: 500; }
th:first-child { width: 183px; }
th:nth-child(2) { width: 170px; }
.n { font-size: 15px; letter-spacing: -.1px; padding-left: 12px; }
sup { font-size: 11.5px; line-height: 0; vertical-align: 6px; }
button { margin: 48px 0 0 77px; width: 74px; height: 38px; border: 0; border-radius: 4px; background: #007bff; color: #fff; font: inherit; letter-spacing: 1px; padding: 0 0 1px; }
.map { position: relative; width: 750px; height: 450px; margin-left: 48px; border: 2px solid; border-color: #999 #eee #eee #999; overflow: hidden; }
.tiles { width: 746px; height: 446px; }
.st { fill: none; stroke: #fff; stroke-width: 4.5; }
.wood { fill: #add19e; }
.cas { fill: none; stroke-linejoin: round; }
.centre { fill: none; stroke: #b19aa0; stroke-width: 5; stroke-dasharray: 20 8; }
.bound { fill: none; stroke: #927ba9; stroke-width: 5; stroke-dasharray: 20 7 5 7; opacity: .65; }
.station { fill: #7881b4; }
.shield { font: 26px "Noto Sans"; text-anchor: middle; fill: #444; }
.rd { font: 400 23px "Noto Sans CJK KR", sans-serif; text-anchor: middle; fill: #222; stroke: #f5f3c7; stroke-width: 3px; paint-order: stroke; }
.rd text { dominant-baseline: central; }
.pl { font: 31px "Noto Sans CJK KR", sans-serif; text-anchor: middle; fill: #333; stroke: #fff; stroke-opacity: .75; stroke-width: 5px; paint-order: stroke; }
.marks { fill: #3186cc; fill-opacity: .2; stroke: #3186cc; stroke-width: 9; }
.zoom { position: absolute; left: 10px; top: 10px; width: 26px; height: 52px; border-radius: 4px; background: #fff; box-shadow: 0 1px 5px rgba(0,0,0,.65); font: 700 18px/25px "DejaVu Sans", sans-serif; color: #000; text-align: center; }
.zoom span { display: block; height: 25px; }
.zoom span + span { border-top: 1px solid #ccc; height: 27px; }
.attr { position: absolute; right: 0; bottom: 0; padding: 0 5px; background: rgba(255,255,255,.7); font: 11px/16px "Liberation Sans", sans-serif; color: #333; white-space: nowrap; }
.attr a { color: #0078a8; }
footer { height: 56px; flex: none; background: #f8f9fa; color: #858b91; text-align: center; line-height: 54px; font-size: 15px; font-weight: 400; letter-spacing: .12px; }
```
